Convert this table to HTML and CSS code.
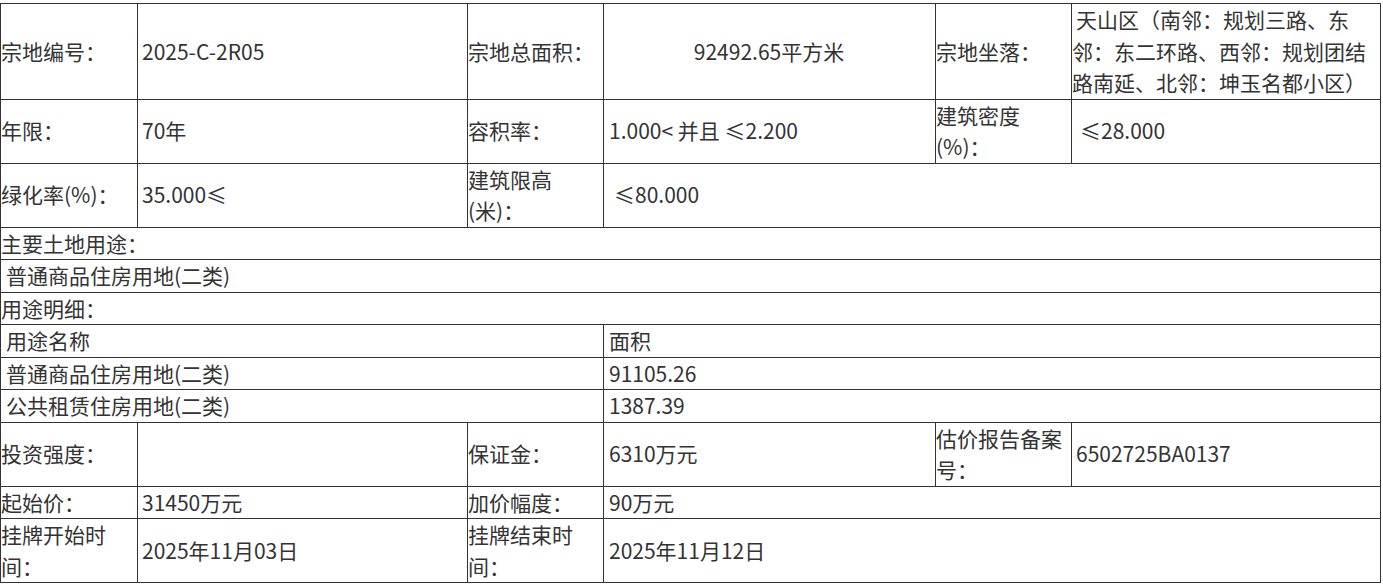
FILE: index.html
```html
<!DOCTYPE html>
<html lang="zh-CN">
<head>
<meta charset="utf-8">
<title>宗地信息</title>
<link rel="stylesheet" href="styles.css">
</head>
<body>
<table class="land">
  <colgroup>
    <col class="c1"><col class="c2"><col class="c3"><col class="c4"><col class="c5"><col class="c6">
  </colgroup>
  <tbody>
    <tr>
      <td class="lbl">宗地编号：</td>
      <td class="val">2025-C-2R05</td>
      <td class="lbl">宗地总面积：</td>
      <td class="val center">92492.65平方米</td>
      <td class="lbl">宗地坐落：</td>
      <td class="val addr">天山区（南邻：规划三路、东邻：东二环路、西邻：规划团结路南延、北邻：坤玉名都小区）</td>
    </tr>
    <tr>
      <td class="lbl">年限：</td>
      <td class="val">70年</td>
      <td class="lbl">容积率：</td>
      <td class="val mid">1.000&lt; 并且 ≤2.200</td>
      <td class="lbl">建筑密度(%)：</td>
      <td class="val indent-s">≤28.000</td>
    </tr>
    <tr>
      <td class="lbl">绿化率(%)：</td>
      <td class="val">35.000≤</td>
      <td class="lbl">建筑限高(米)：</td>
      <td class="val indent-l" colspan="3">≤80.000</td>
    </tr>
    <tr>
      <td class="lbl" colspan="6">主要土地用途：</td>
    </tr>
    <tr>
      <td class="sub" colspan="6">普通商品住房用地(二类)</td>
    </tr>
    <tr>
      <td class="lbl" colspan="6">用途明细：</td>
    </tr>
    <tr>
      <td class="sub" colspan="3">用途名称</td>
      <td class="val mid" colspan="3">面积</td>
    </tr>
    <tr>
      <td class="sub" colspan="3">普通商品住房用地(二类)</td>
      <td class="val mid" colspan="3">91105.26</td>
    </tr>
    <tr>
      <td class="sub" colspan="3">公共租赁住房用地(二类)</td>
      <td class="val mid" colspan="3">1387.39</td>
    </tr>
    <tr>
      <td class="lbl">投资强度：</td>
      <td class="val"></td>
      <td class="lbl">保证金：</td>
      <td class="val mid">6310万元</td>
      <td class="lbl">估价报告备案号：</td>
      <td class="val">6502725BA0137</td>
    </tr>
    <tr>
      <td class="lbl">起始价：</td>
      <td class="val">31450万元</td>
      <td class="lbl">加价幅度：</td>
      <td class="val mid" colspan="3">90万元</td>
    </tr>
    <tr>
      <td class="lbl">挂牌开始时间：</td>
      <td class="val">2025年11月03日</td>
      <td class="lbl">挂牌结束时间：</td>
      <td class="val mid" colspan="3">2025年11月12日</td>
    </tr>
  </tbody>
</table>
</body>
</html>
```

FILE: styles.css
```css
html, body {
  margin: 0;
  padding: 0;
  background: #ffffff;
}

body {
  font-family: "Noto Sans CJK SC", "Noto Sans", sans-serif;
  font-size: 21px;
  line-height: 1.5;
  color: #333333;
}

.land {
  margin-top: 3px;
  width: 1380px;
  table-layout: fixed;
  border-collapse: collapse;
}

.c1 { width: 137px; }
.c2 { width: 330px; }
.c3 { width: 136px; }
.c4 { width: 332px; }
.c5 { width: 136px; }
.c6 { width: 309px; }

.land td {
  border: 1px solid #333333;
  padding: 0 1px 0 0;
  vertical-align: middle;
  text-align: left;
  word-break: normal;
}

.land td.val {
  padding-left: 4px;
}

.land td.val.mid {
  padding-left: 5px;
}

.land td.sub {
  padding-left: 5px;
}

.land td.center {
  text-align: center;
  padding-left: 0;
}

.land td.addr {
  padding-left: 0;
  padding-right: 2px;
  text-indent: 4px;
}

.land td.indent-s {
  padding-left: 8px;
}

.land td.indent-l {
  padding-left: 10px;
}
```
